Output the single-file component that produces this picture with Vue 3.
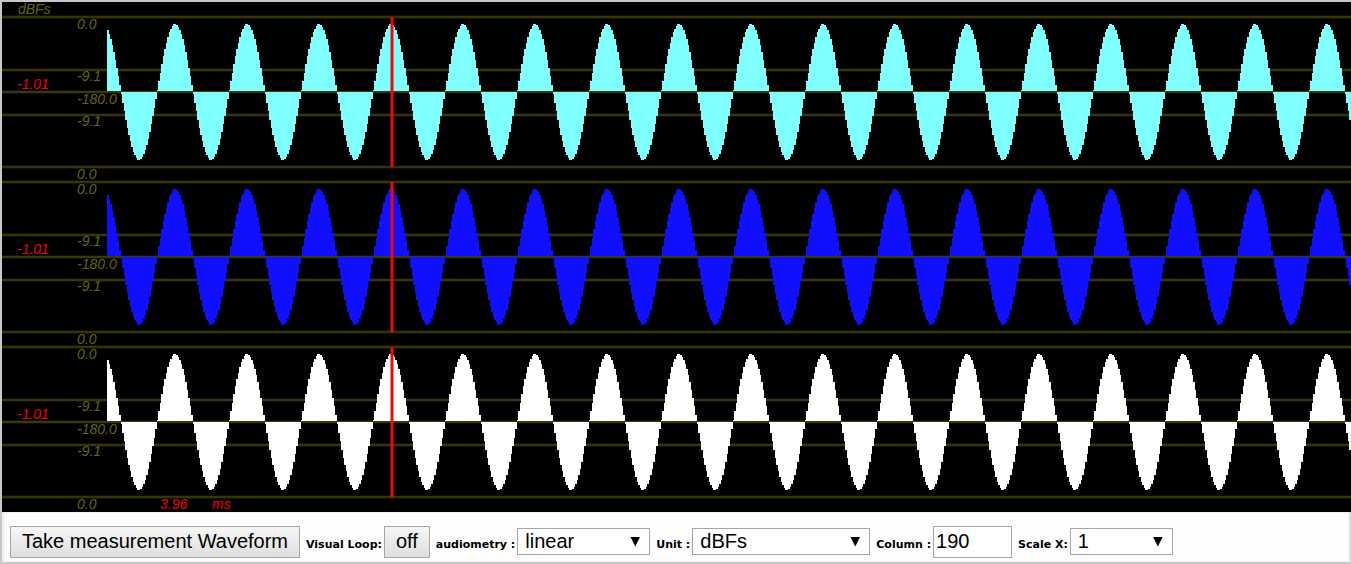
<script setup>
import { ref } from 'vue'

const loop = ref(false)
const scale = ref('linear')
const unit = ref('dBFs')
const column = ref('190')
const scaleX = ref('1')

const originX = 105
const columnWidth = 1.5
const amplitude = 68
const middle = 90
const columns = 1700

function wavePath() {
  let d = `M${originX} ${middle}`
  for (let k = 0; k < columns; k++) {
    const value = Math.cos((2 * Math.PI * (k - 44.8)) / 48)
    const y = Math.round(middle - amplitude * value)
    d += `V${y}H${originX + (k + 1) * columnWidth}`
  }
  return d + `V${middle}Z`
}

const wave = wavePath()

const channels = [
  { name: 'cyan', offset: 0 },
  { name: 'blue', offset: 165 },
  { name: 'white', offset: 330 }
]

const gridLines = [14, 67, 89, 112, 164]

const levels = [
  { y: 27, text: '0.0' },
  { y: 79, text: '-9.1' },
  { y: 102, text: '-180.0' },
  { y: 124, text: '-9.1' },
  { y: 177, text: '0.0' }
]
</script>

<template>
  <main class="panel">
    <svg class="scope" role="img" aria-label="Waveform">
      <text class="level" x="16" y="12">dBFs</text>
      <g v-for="c in channels" :key="c.name" :transform="`translate(0 ${c.offset})`">
        <template v-for="y in gridLines" :key="y">
          <rect class="grid-edge" x="0" :y="y - 1" width="100%" height="4" />
          <rect class="grid" x="0" :y="y" width="100%" height="2" />
        </template>
        <path :class="['wave', c.name]" :d="wave" />
        <rect class="axis" x="0" y="89" width="100%" height="1" />
        <text v-for="l in levels" :key="l.y" class="level" x="75" :y="l.y">{{ l.text }}</text>
        <text class="reading" x="15" y="87">-1.01</text>
        <rect class="cursor" x="389" y="15" width="2" height="150" />
        <rect class="cursor-edge" x="388" y="15" width="4" height="150" />
      </g>
      <text class="reading" x="158" y="507">3.96</text>
      <text class="reading" x="210" y="507">ms</text>
    </svg>

    <form class="toolbar" @submit.prevent>
      <button type="button">Take measurement Waveform</button>
      <div class="field">
        <label for="loop">Visual Loop:</label>
        <button id="loop" type="button" @click="loop = !loop">{{ loop ? 'on' : 'off' }}</button>
      </div>
      <div class="field">
        <label for="scale">audiometry :</label>
        <span class="picker medium">
          <select id="scale" v-model="scale">
            <option>linear</option>
            <option>log</option>
          </select>
        </span>
      </div>
      <div class="field">
        <label for="unit">Unit :</label>
        <span class="picker wide">
          <select id="unit" v-model="unit">
            <option>dBFs</option>
            <option>V</option>
          </select>
        </span>
      </div>
      <div class="field">
        <label for="column">Column :</label>
        <input id="column" v-model="column" type="text" />
      </div>
      <div class="field">
        <label for="scale-x">Scale X:</label>
        <span class="picker narrow">
          <select id="scale-x" v-model="scaleX">
            <option>1</option>
            <option>2</option>
          </select>
        </span>
      </div>
    </form>
  </main>
</template>

<style>
body {
  margin: 0;
  background: #fff;
}
</style>

<style scoped>
.panel {
  border: 2px solid #c8c8c8;
  border-right: 0;
  background: #fdfdfd;
  overflow: hidden;
}
.scope {
  display: block;
  width: 100%;
  height: 510px;
  background: #000;
  font: italic 14px "Liberation Sans", Arial, sans-serif;
}
.grid {
  fill: #363409;
}
.grid-edge {
  fill: #100f02;
}
.axis {
  fill: #3c3a10;
}
.wave {
  shape-rendering: crispEdges;
}
.cyan {
  fill: #80ffff;
}
.blue {
  fill: #1010ff;
}
.white {
  fill: #fff;
}
.level {
  fill: #66640e;
}
.reading {
  fill: #f40014;
}
.cursor {
  fill: #f00808;
}
.cursor-edge {
  fill: #f00808;
  opacity: 0.5;
}
.toolbar {
  display: flex;
  align-items: baseline;
  gap: 6px;
  padding: 14px 8px 4px;
  box-shadow: inset -2px 0 2px #ddd, inset 2px 0 2px #eee;
  font: 20px "Liberation Sans", Arial, sans-serif;
  color: #000;
}
.field {
  display: flex;
  align-items: baseline;
  gap: 2px;
}
label {
  font: bold 11px "DejaVu Sans", Verdana, sans-serif;
  white-space: nowrap;
}
button,
input,
select {
  box-sizing: border-box;
  margin: 0;
  border: 1px solid #a6a6a6;
  border-radius: 0;
  font: inherit;
  line-height: 24px;
  color: inherit;
}
button {
  height: 32px;
  padding: 0 11px 2px;
  background: linear-gradient(#f6f6f6, #dedede);
  white-space: nowrap;
}
input {
  width: 79px;
  height: 32px;
  padding: 0 2px 1px;
  background: #fff;
}
.picker {
  position: relative;
  display: inline-block;
}
.picker::after {
  content: "";
  position: absolute;
  right: 10px;
  top: 9px;
  width: 10px;
  height: 10px;
  background: #000;
  clip-path: polygon(0 0, 100% 0, 50% 100%);
  pointer-events: none;
}
select {
  width: 100%;
  height: 27px;
  padding: 0 7px;
  appearance: none;
  background: #fff;
}
.medium {
  width: 133px;
}
.wide {
  width: 178px;
}
.narrow {
  width: 103px;
}
</style>
